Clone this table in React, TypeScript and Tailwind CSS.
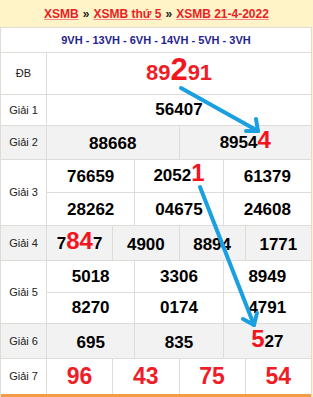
import React from 'react';

const line = 'border-[#dfdbd6]';

function Label({ children }: { children: React.ReactNode }) {
  return (
    <div className={`w-[46px] shrink-0 flex items-center justify-center border-r ${line} text-[11px] text-[#222]`}>
      {children}
    </div>
  );
}

function Cell({ children, last }: { children: React.ReactNode; last?: boolean }) {
  return (
    <div
      className={`flex-1 basis-0 flex items-end justify-center pb-[7px] text-[17px] leading-none font-bold text-black ${
        last ? '' : `border-r ${line}`
      }`}
    >
      <span>{children}</span>
    </div>
  );
}

function Hot({ children }: { children: React.ReactNode }) {
  return <span className="text-[24px] text-[#f3141e]">{children}</span>;
}

function Red({ children, last }: { children: React.ReactNode; last?: boolean }) {
  return (
    <div
      className={`flex-1 basis-0 flex items-center justify-center text-[23px] font-bold text-[#ef1d27] ${
        last ? '' : `border-r ${line}`
      }`}
    >
      {children}
    </div>
  );
}

function Arrows() {
  return (
    <svg className="absolute inset-0 pointer-events-none" width="313" height="397" viewBox="0 0 313 397">
      <g stroke="#1a9fe0" strokeWidth="4" strokeLinecap="round" fill="none">
        <line x1="181" y1="88" x2="258" y2="131" />
        <line x1="258" y1="131" x2="256" y2="119" />
        <line x1="258" y1="131" x2="246" y2="131" />
        <line x1="200" y1="187" x2="254" y2="325" />
        <line x1="254" y1="325" x2="243" y2="319" />
        <line x1="254" y1="325" x2="257" y2="313" />
      </g>
    </svg>
  );
}

export default function App() {
  return (
    <div className="relative w-[313px] h-[397px] bg-[#fff3c8] font-['Liberation_Sans',Arial,sans-serif] overflow-hidden">
      <div className="h-[27px] flex items-center justify-center gap-[4px] text-[12px] font-bold">
        <a className="text-[#ec1c24] underline decoration-[#f08a8f]">XSMB</a>
        <span className="text-[#222]">»</span>
        <a className="text-[#ec1c24] underline decoration-[#f08a8f]">XSMB thứ 5</a>
        <span className="text-[#222]">»</span>
        <a className="text-[#ec1c24] underline decoration-[#f08a8f]">XSMB 21-4-2022</a>
      </div>

      <div className={`w-[312px] border-x border-t ${line} bg-white`}>
        <div className={`h-[25px] flex items-center justify-center border-b ${line} text-[11px] font-bold text-[#1f2390]`}>
          9VH - 13VH - 6VH - 14VH - 5VH - 3VH
        </div>

        <div className={`h-[42px] flex border-b ${line}`}>
          <Label>ĐB</Label>
          <div className="flex-1 flex items-end justify-center pb-[9px] font-bold text-[22px] leading-none text-[#ef1d27]">
            <span>
              89<span className="text-[31px] text-[#f3141e]">2</span>91
            </span>
          </div>
        </div>

        <div className={`h-[31px] flex border-b ${line}`}>
          <Label>Giải 1</Label>
          <Cell last>56407</Cell>
        </div>

        <div className={`h-[34px] flex border-b ${line} bg-[#f2f2f2]`}>
          <Label>Giải 2</Label>
          <Cell>88668</Cell>
          <Cell last>
            8954<Hot>4</Hot>
          </Cell>
        </div>

        <div className={`h-[66px] flex border-b ${line}`}>
          <Label>Giải 3</Label>
          <div className="flex-1 flex flex-col">
            <div className={`flex-1 flex border-b ${line}`}>
              <Cell>76659</Cell>
              <Cell>
                2052<Hot>1</Hot>
              </Cell>
              <Cell last>61379</Cell>
            </div>
            <div className="flex-1 flex">
              <Cell>28262</Cell>
              <Cell>04675</Cell>
              <Cell last>24608</Cell>
            </div>
          </div>
        </div>

        <div className={`h-[35px] flex border-b ${line} bg-[#f2f2f2]`}>
          <Label>Giải 4</Label>
          <Cell>
            7<Hot>84</Hot>7
          </Cell>
          <Cell>4900</Cell>
          <Cell>8894</Cell>
          <Cell last>1771</Cell>
        </div>

        <div className={`h-[63px] flex border-b ${line}`}>
          <Label>Giải 5</Label>
          <div className="flex-1 flex flex-col">
            <div className={`h-[32px] flex border-b ${line}`}>
              <Cell>5018</Cell>
              <Cell>3306</Cell>
              <Cell last>8949</Cell>
            </div>
            <div className="flex-1 flex">
              <Cell>8270</Cell>
              <Cell>0174</Cell>
              <Cell last>4791</Cell>
            </div>
          </div>
        </div>

        <div className={`h-[35px] flex border-b ${line} bg-[#f2f2f2]`}>
          <Label>Giải 6</Label>
          <Cell>695</Cell>
          <Cell>835</Cell>
          <Cell last>
            <Hot>5</Hot>27
          </Cell>
        </div>

        <div className="h-[38px] flex border-b-[3px] border-b-[#f39c45]">
          <Label>Giải 7</Label>
          <Red>96</Red>
          <Red>43</Red>
          <Red>75</Red>
          <Red last>54</Red>
        </div>
      </div>

      <Arrows />
    </div>
  );
}
